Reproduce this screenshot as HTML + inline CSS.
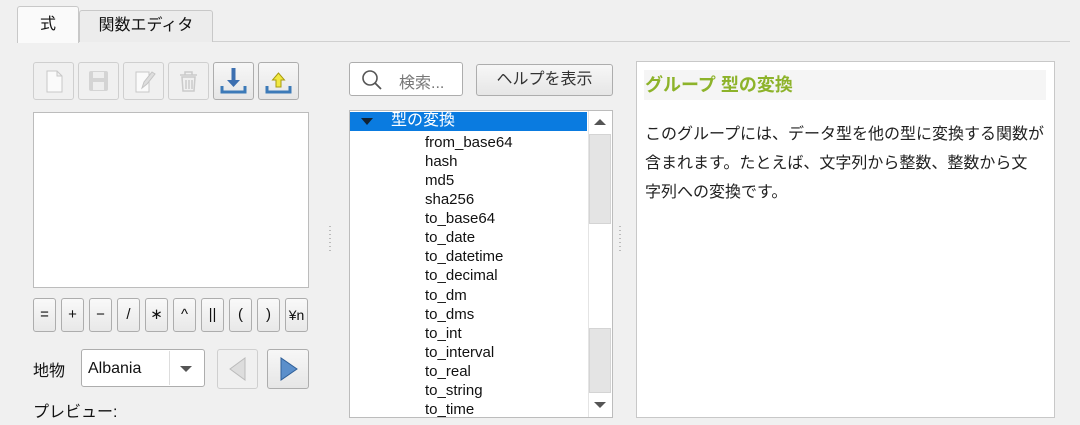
<!DOCTYPE html>
<html><head><meta charset="utf-8"><style>
*{box-sizing:border-box;margin:0;padding:0}
body{width:1080px;height:425px;background:#f0f0f0;position:relative;overflow:hidden;font-family:"Liberation Sans","Noto Sans CJK JP",sans-serif;color:#111}
.a{position:absolute}
.btn{position:absolute;border:1px solid #adadad;border-radius:3px;background:linear-gradient(#f7f7f7,#e6e6e6)}
.dis{border-color:#cfcfcf;background:#f0f0f0}
.op{position:absolute;top:298px;width:23px;height:34px;border:1px solid #adadad;border-radius:3px;background:linear-gradient(#f9f9f9,#e8e8e8);font-size:15px;text-align:center;line-height:32px}
.row{position:absolute;left:425px;font-size:15px;height:19px;line-height:19px}
.dots{position:absolute;width:2px;height:26px;background:repeating-linear-gradient(#bbb 0 1px,transparent 1px 4px)}
</style></head><body>
<div class="a" style="left:17px;top:41px;width:1053px;height:1px;background:#d0d0d0"></div>
<div class="a" style="left:79px;top:10px;width:134px;height:32px;border:1px solid #c8c8c8;border-bottom:none;border-radius:3px 3px 0 0;background:#ececec;font-size:16px;text-align:center;line-height:30px">関数エディタ</div>
<div class="a" style="left:17px;top:6px;width:62px;height:37px;border:1px solid #c8c8c8;border-bottom:none;border-radius:3px 3px 0 0;background:#fafafa;font-size:16px;text-align:center;line-height:36px">式</div>

<div class="btn dis" style="left:33px;top:62px;width:41px;height:38px"><svg width="39" height="36"><path d="M13 8h10l5 5v16H13z M23 8v5h5" fill="#fafafa" stroke="#c8c8c8"/></svg></div>
<div class="btn dis" style="left:78px;top:62px;width:41px;height:38px"><svg width="39" height="36"><rect x="10" y="8" width="19" height="20" rx="2" fill="#d4d4d4"/><rect x="14" y="9" width="11" height="6" fill="#eee"/><rect x="14" y="19" width="11" height="8" fill="#eee"/></svg></div>
<div class="btn dis" style="left:123px;top:62px;width:41px;height:38px"><svg width="39" height="36"><path d="M12 9h13v20H12z" fill="#fafafa" stroke="#c8c8c8"/><path d="M18 25l2-6 8-10 3 2-8 10z" fill="#ddd" stroke="#c4c4c4"/></svg></div>
<div class="btn dis" style="left:168px;top:62px;width:41px;height:38px"><svg width="39" height="36"><path d="M11 12h17M16 12v-3h7v3M13 14h13l-1 14H14z M17 17v9M20 17v9M23 17v9" fill="none" stroke="#cacaca" stroke-width="1.5"/></svg></div>
<div class="btn" style="left:213px;top:62px;width:41px;height:38px"><svg width="39" height="36"><path d="M19.5 5v16" stroke="#3c6fb0" stroke-width="4"/><path d="M13 17l6.5 7 6.5-7z" fill="#3c6fb0"/><path d="M8 23v6h23v-6" fill="none" stroke="#3c7ab8" stroke-width="3"/></svg></div>
<div class="btn" style="left:258px;top:62px;width:41px;height:38px"><svg width="39" height="36"><path d="M19.5 10l-6 7h3.5v7h5v-7h3.5z" fill="#f1e840" stroke="#a89b10"/><path d="M8 23v6h23v-6" fill="none" stroke="#3c7ab8" stroke-width="3"/></svg></div>

<div class="a" style="left:33px;top:112px;width:276px;height:176px;background:#fff;border:1px solid #bcbcbc"></div>

<div class="op" style="left:33px">=</div><div class="op" style="left:61px">+</div><div class="op" style="left:89px">−</div><div class="op" style="left:117px">/</div><div class="op" style="left:145px">∗</div><div class="op" style="left:173px">^</div><div class="op" style="left:201px">||</div><div class="op" style="left:229px">(</div><div class="op" style="left:257px">)</div><div class="op" style="left:285px;font-size:14px">¥n</div>

<div class="a" style="left:33px;top:357px;font-size:16px">地物</div>
<div class="a" style="left:81px;top:349px;width:124px;height:38px;border:1px solid #adadad;border-radius:3px;background:#fff;font-size:16px;line-height:38px;padding-left:6px">Albania</div>
<div class="a" style="left:169px;top:351px;width:1px;height:34px;background:#ddd"></div>
<div class="a" style="left:180px;top:366px;width:0;height:0;border-left:6px solid transparent;border-right:6px solid transparent;border-top:6px solid #555"></div>
<div class="btn dis" style="left:217px;top:349px;width:41px;height:40px"><svg width="39" height="38"><path d="M27 8v22L12 19z" fill="#ddd" stroke="#bbb"/></svg></div>
<div class="btn" style="left:267px;top:349px;width:42px;height:40px"><svg width="40" height="38"><path d="M13 8v22l16-11z" fill="#5b8fcb" stroke="#2f5f98"/></svg></div>
<div class="a" style="left:33px;top:398px;font-size:16px">プレビュー:</div>

<div class="dots" style="left:329px;top:226px"></div>
<div class="dots" style="left:619px;top:226px"></div>

<div class="a" style="left:349px;top:62px;width:114px;height:34px;border:1px solid #adadad;border-radius:3px;background:#fff"></div>
<svg class="a" style="left:360px;top:68px" width="24" height="24"><circle cx="10" cy="10" r="7" fill="none" stroke="#555" stroke-width="1.6"/><path d="M15 15l6 6" stroke="#555" stroke-width="1.8"/></svg>
<div class="a" style="left:399px;top:69px;font-size:16px;color:#777">検索...</div>
<div class="btn" style="left:476px;top:64px;width:137px;height:32px;font-size:16px;text-align:center;line-height:30px;color:#333">ヘルプを表示</div>

<div class="a" style="left:349px;top:110px;width:264px;height:308px;background:#fff;border:1px solid #bcbcbc"></div>
<div class="a" style="left:350px;top:112px;width:237px;height:19px;background:#0a7be0"></div>
<div class="a" style="left:361px;top:118px;width:0;height:0;border-left:6px solid transparent;border-right:6px solid transparent;border-top:7px solid #123"></div>
<div class="a" style="left:391px;top:111px;font-size:16px;color:#fff;line-height:20px">型の変換</div>
<div class="row" style="top:133px">from_base64</div>
<div class="row" style="top:152px">hash</div>
<div class="row" style="top:171px">md5</div>
<div class="row" style="top:190px">sha256</div>
<div class="row" style="top:209px">to_base64</div>
<div class="row" style="top:228px">to_date</div>
<div class="row" style="top:247px">to_datetime</div>
<div class="row" style="top:266px">to_decimal</div>
<div class="row" style="top:286px">to_dm</div>
<div class="row" style="top:305px">to_dms</div>
<div class="row" style="top:324px">to_int</div>
<div class="row" style="top:343px">to_interval</div>
<div class="row" style="top:362px">to_real</div>
<div class="row" style="top:381px">to_string</div>
<div class="row" style="top:400px;height:17px;overflow:hidden">to_time</div>
<div class="a" style="left:588px;top:111px;width:24px;height:306px;background:#fff;border-left:1px solid #e4e4e4"></div>
<div class="a" style="left:594px;top:119px;width:0;height:0;border-left:6px solid transparent;border-right:6px solid transparent;border-bottom:6px solid #555"></div>
<div class="a" style="left:589px;top:134px;width:22px;height:90px;background:#e4e4e4;border:1px solid #d4d4d4"></div>
<div class="a" style="left:589px;top:328px;width:22px;height:65px;background:#e4e4e4;border:1px solid #d4d4d4"></div>
<div class="a" style="left:594px;top:402px;width:0;height:0;border-left:6px solid transparent;border-right:6px solid transparent;border-top:6px solid #555"></div>

<div class="a" style="left:636px;top:61px;width:419px;height:357px;background:#fff;border:1px solid #c8c8c8"></div>
<div class="a" style="left:644px;top:70px;width:402px;height:30px;background:#f5f5f5"></div>
<div class="a" style="left:645px;top:73px;font-size:18px;color:#8db32a;font-weight:bold;line-height:24px">グループ 型の変換</div>
<div class="a" style="left:645px;top:120px;width:400px;font-size:16px;line-height:29px;color:#222">このグループには、データ型を他の型に変換する関数が<br>含まれます。たとえば、文字列から整数、整数から文<br>字列への変換です。</div>
</body></html>
